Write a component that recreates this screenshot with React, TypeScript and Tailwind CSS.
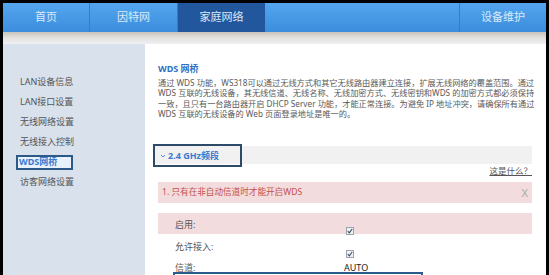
import React from "react";

const F = { fontFamily: '"Noto Sans", "Noto Sans CJK SC", sans-serif' };

function Check() {
  return (
    <span className="inline-flex w-[8px] h-[8px] border border-[#9aa4b0] bg-[#eef1f5] items-center justify-center">
      <svg width="6" height="6" viewBox="0 0 6 6">
        <path d="M0.8 3.2 L2.3 4.8 L5.2 1" stroke="#3a4a5e" strokeWidth="1.1" fill="none" />
      </svg>
    </span>
  );
}

export default function App() {
  const side = ["LAN设备信息", "LAN接口设置", "无线网络设置", "无线接入控制", "WDS网桥", "访客网络设置"];
  return (
    <div className="w-[549px] h-[275px] bg-black pl-[3px] pt-[3px] pr-[3px] overflow-hidden" style={F}>
      <div className="flex flex-col h-full bg-white">
        {/* nav */}
        <div className="h-[29px] flex bg-gradient-to-b from-[#53a6ee] to-[#3c8ddd] text-[11px] text-[#dce9f8]">
          <div className="w-[87px] flex items-center justify-center border-r border-[#3a7cc4]">首页</div>
          <div className="w-[88px] flex items-center justify-center border-r border-[#3a7cc4]">因特网</div>
          <div className="w-[87px] flex items-center justify-center bg-[#22579e]">家庭网络</div>
          <div className="flex-1 border-r border-[#3a7cc4]"></div>
          <div className="w-[86px] flex items-center justify-center">设备维护</div>
        </div>
        <div className="h-[12px] bg-gradient-to-b from-[#c9c4bc] via-[#e4e2de] to-[#eef0f3]"></div>
        <div className="flex flex-1 overflow-hidden">
          {/* sidebar */}
          <div className="w-[142px] bg-[#d9e1ec] pt-[28px] pl-[17px] text-[9px] text-[#555]">
            {side.map((s) =>
              s === "WDS网桥" ? (
                <div key={s} className="h-[20px] flex items-center">
                  <div className="-ml-[4px] w-[57px] h-[15px] border-2 border-[#2c5a88] bg-[#e9f1fb] pl-[1px] flex items-center font-bold text-[#3b7bd0]">
                    {s}
                  </div>
                </div>
              ) : (
                <div key={s} className="h-[20px] flex items-center">{s}</div>
              )
            )}
          </div>
          {/* main */}
          <div className="flex-1 bg-white pl-[13px] pr-[14px] overflow-hidden">
            <div className="mt-[19px] h-[12px] leading-[12px] text-[9px] font-bold text-[#2f72c4]">WDS 网桥</div>
            <div className="mt-[3px] text-[8.2px] leading-[10.3px] text-[#5a5a5a] whitespace-nowrap">
              <div>通过 WDS 功能，WS318可以通过无线方式和其它无线路由器建立连接，扩展无线网络的覆盖范围。通过</div>
              <div>WDS 互联的无线设备，其无线信道、无线名称、无线加密方式、无线密钥和WDS 的加密方式都必须保持</div>
              <div>一致，且只有一台路由器开启 DHCP Server 功能，才能正常连接。为避免 IP 地址冲突，请确保所有通过</div>
              <div>WDS 互联的无线设备的 Web 页面登录地址是唯一的。</div>
            </div>
            <div className="relative mt-[27px] -ml-[5px] h-[18px] bg-[#f1f1f1]">
              <div className="absolute -top-[2px] left-0 w-[89px] h-[23px] border-2 border-[#2d4b69] flex items-center pl-[5px] text-[9px] font-bold text-[#3b7bd0]">
                <svg width="6" height="6" viewBox="0 0 6 6" className="mr-[2px] mt-[1px]">
                  <path d="M1 2 L3 4 L5 2" stroke="#5a8fd0" strokeWidth="1" fill="none" />
                </svg>
                2.4 GHz频段
              </div>
            </div>
            <div className="mt-[2px] h-[10px] leading-[10px] text-right text-[8.5px] text-[#555] underline">这是什么？</div>
            <div className="mt-[6px] h-[21px] bg-[#f3dcdd] flex items-center justify-between pl-[4px] pr-[4px] text-[8.6px] text-[#c4504e]">
              <span>1. 只有在非自动信道时才能开启WDS</span>
              <span className="text-[#a8a8a8] text-[11px] leading-none">X</span>
            </div>
            <div className="mt-[10px] h-[21px] bg-[#f3dcdd] flex text-[9px] text-[#555]">
              <div className="w-[188px] pl-[17px] pt-[5px]">启用:</div>
              <div className="pt-[11px]"><Check /></div>
            </div>
            <div className="h-[20px] flex text-[9px] text-[#555]">
              <div className="w-[188px] pl-[17px] pt-[6px]">允许接入:</div>
              <div className="pt-[13px]"><Check /></div>
            </div>
            <div className="relative h-[20px] flex text-[9px] text-[#555]">
              <div className="w-[186px] pl-[17px] pt-[7px]">信道:</div>
              <div className="pt-[7px] text-[#222]">AUTO</div>
              <div className="absolute left-[15px] top-[18px] w-[250px] h-[6px] border-t-2 border-x-2 border-[#2a5b8c]"></div>
            </div>
          </div>
        </div>
      </div>
    </div>
  );
}
